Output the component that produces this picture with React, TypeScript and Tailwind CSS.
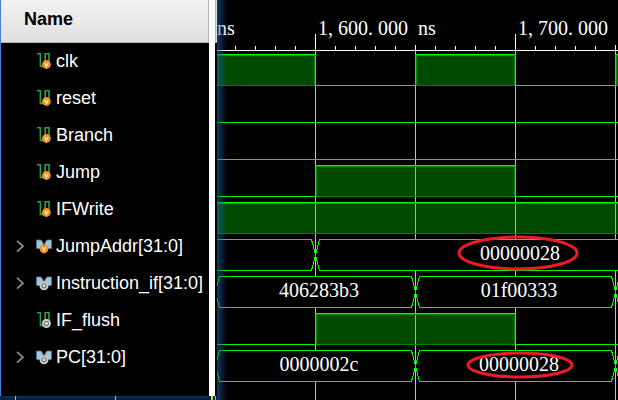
import React from "react";

type Badge = "value" | "ring";
type Level = { kind: "level"; from: number; to: number; high: boolean };
type Bus = { kind: "bus"; from: number; to: number; value?: string; center?: number };
type Signal = {
  name: string;
  bus?: boolean;
  badge: Badge;
  wave: (Level | Bus)[];
  mark?: { cx: number; cy: number; rx: number; ry: number };
};

const END = 1200;
const lv = (from: number, to: number, high: boolean): Level => ({ kind: "level", from, to, high });
const bus = (from: number, to: number, value?: string, center?: number): Bus => ({ kind: "bus", from, to, value, center });

const signals: Signal[] = [
  {
    name: "clk",
    badge: "value",
    wave: [lv(-2, 98, true), lv(98, 198, false), lv(198, 298, true), lv(298, 398, false), lv(398, 498, true), lv(498, END, false)],
  },
  { name: "reset", badge: "value", wave: [lv(-2, END, false)] },
  { name: "Branch", badge: "value", wave: [lv(-2, END, false)] },
  { name: "Jump", badge: "value", wave: [lv(-2, 98, false), lv(98, 298, true), lv(298, END, false)] },
  { name: "IFWrite", badge: "value", wave: [lv(-2, END, true)] },
  {
    name: "JumpAddr[31:0]",
    bus: true,
    badge: "value",
    wave: [bus(-102, 98), bus(98, END, "00000028", 303)],
    mark: { cx: 301, cy: 17, rx: 59, ry: 16 },
  },
  {
    name: "Instruction_if[31:0]",
    bus: true,
    badge: "ring",
    wave: [bus(-2, 198, "406283b3", 102), bus(198, 398, "01f00333", 302), bus(398, END)],
  },
  { name: "IF_flush", badge: "ring", wave: [lv(-2, 98, false), lv(98, 298, true), lv(298, END, false)] },
  {
    name: "PC[31:0]",
    bus: true,
    badge: "ring",
    wave: [bus(-2, 198, "0000002c", 102), bus(198, 398, "00000028", 302), bus(398, END)],
    mark: { cx: 303, cy: 18, rx: 52, ry: 12 },
  },
];

function BadgeMark({ type, cx, cy }: { type: Badge; cx: number; cy: number }) {
  if (type === "value") {
    return (
      <g>
        <circle cx={cx} cy={cy} r="4.4" fill="#f0921e" />
        <path d={`M${cx - 1.7} ${cy - 1.8}L${cx} ${cy + 1.8}L${cx + 1.7} ${cy - 1.8}`} fill="none" stroke="#fff3dc" strokeWidth="1.2" />
      </g>
    );
  }
  return (
    <g>
      <circle cx={cx} cy={cy} r="4.5" fill="#c9c9c9" />
      <circle cx={cx} cy={cy} r="2" fill="#e6e6e6" stroke="#6e6e6e" strokeWidth="1.1" />
    </g>
  );
}

function SignalIcon({ isBus, badge }: { isBus?: boolean; badge: Badge }) {
  return (
    <svg className="h-4 w-4 shrink-0" viewBox="0 0 16 16" aria-hidden="true">
      {isBus ? (
        <>
          <path d="M0.5 2H5L7.2 5V10.5H0.5Z" fill="#9cc6dc" stroke="#62727c" strokeWidth="0.8" />
          <path d="M15.5 2H11L8.8 5V10.5H15.5Z" fill="#9cc6dc" stroke="#62727c" strokeWidth="0.8" />
          <BadgeMark type={badge} cx={8} cy={10.8} />
        </>
      ) : (
        <>
          <path d="M1 0.8H4.4V13.4H9.2V0.8H13V12" fill="none" stroke="#2f9e44" strokeWidth="1.6" />
          <BadgeMark type={badge} cx={10.4} cy={11.5} />
        </>
      )}
    </svg>
  );
}

function NameRow({ signal }: { signal: Signal }) {
  return (
    <li className="flex h-[37px] items-center pb-0.5 pl-[15px]">
      {signal.bus ? (
        <button type="button" aria-label={`Expand ${signal.name}`} className="flex w-5 shrink-0">
          <svg className="h-3 w-2" viewBox="0 0 8 12" aria-hidden="true">
            <path d="M1 0.8L7 6.2L1 11.6" fill="none" stroke="#929292" strokeWidth="1.6" />
          </svg>
        </button>
      ) : (
        <span className="w-5 shrink-0" />
      )}
      <SignalIcon isBus={signal.bus} badge={signal.badge} />
      <span className="ml-1 text-lg leading-5 whitespace-nowrap text-white">{signal.name}</span>
    </li>
  );
}

function LevelShape({ from, to, high }: Level) {
  if (!high) return <rect x={from} y="34" width={to - from + 1} height="1" fill="#00f800" />;
  const w = to - from;
  return (
    <g>
      <rect x={from} y="3" width={w + 1} height="32" fill="#00e100" fillOpacity="0.33" />
      <rect x={from} y="34" width={w} height="1" fill="#008200" />
      <rect x={from + 1} y="4" width={w - 1} height="1" fill="#009600" />
      <rect x={from + 1} y="4" width="1" height="30" fill="#009600" />
      <rect x={to - 1} y="4" width="1" height="30" fill="#009600" />
      <path d={`M${from + 0.5} 35V3.5H${to + 0.5}V35`} fill="none" stroke="#00f800" />
    </g>
  );
}

function BusShape({ from, to, value, center }: Bus) {
  const l = from + 0.5;
  const r = to + 0.5;
  return (
    <g>
      <path
        d={`M${l} 19L${l + 4} 3.5H${r - 4}L${r} 19L${r - 4} 34.5H${l + 4}Z`}
        fill="#000"
        stroke="#00f800"
        shapeRendering="crispEdges"
      />
      {value && (
        <text x={center} y="24" textAnchor="middle" fill="#fff" className="font-['Liberation_Serif',serif] text-xl">
          {value}
        </text>
      )}
    </g>
  );
}

function WaveRow({ signal }: { signal: Signal }) {
  return (
    <svg className="relative z-10 block h-[37px] w-full overflow-visible" role="img" aria-label={`${signal.name} waveform`}>
      {signal.wave.map((s, i) => (s.kind === "level" ? <LevelShape key={i} {...s} /> : <BusShape key={i} {...s} />))}
      {signal.mark && <ellipse {...signal.mark} fill="none" stroke="#ed1c24" strokeWidth="3" />}
    </svg>
  );
}

const ticks = Array.from({ length: 60 }, (_, i) => 18 + i * 20);
const gridLines = Array.from({ length: 12 }, (_, i) => 98 + i * 100);

function TimeLabel({ thousands, hundreds }: { thousands: string; hundreds: string }) {
  return (
    <span className="w-[200px] shrink-0 whitespace-pre">
      <span className="mr-[5px]">{thousands},</span>
      <span className="mr-[5px]">{hundreds}.</span>
      <span className="mr-[5px]">000 </span>
      <span>ns</span>
    </span>
  );
}

function Ruler() {
  return (
    <div className="relative h-[51px]">
      <div className="flex pt-4 font-['Liberation_Serif',serif] text-xl leading-6 text-white">
        <span className="w-[101px] shrink-0">ns</span>
        <TimeLabel thousands="1" hundreds="600" />
        <TimeLabel thousands="1" hundreds="700" />
      </div>
      <svg className="absolute inset-0 h-full w-full" aria-hidden="true">
        <rect x="0" y="50" width="100%" height="1" fill="#fff" />
        {ticks.map((x) => {
          const top = x % 200 === 98 ? 34 : x % 100 === 98 ? 45 : 46;
          return <rect key={x} x={x} y={top} width="1" height={50 - top} fill="#fff" />;
        })}
      </svg>
    </div>
  );
}

export default function App() {
  return (
    <main className="flex min-h-screen overflow-hidden bg-black font-['Liberation_Sans',Arial,sans-serif]">
      <div className="flex w-[217px] shrink-0 flex-col">
        <div className="flex flex-1">
          <section className="min-w-0 flex-1 border-l border-[#4a7fd6] bg-black">
            <h2 className="flex h-[43px] items-center border-r border-b border-[#b4b4b4] bg-linear-to-b from-[#f3f3f3] to-[#dfdfe1] pb-1 pl-[23px] text-lg font-bold text-black">
              Name
            </h2>
            <ul>
              {signals.map((s) => (
                <NameRow key={s.name} signal={s} />
              ))}
            </ul>
          </section>
          <div className="w-1.5 bg-white" />
          <div className="w-0.5">
            <div className="h-[43px] border-b border-l border-[#b4b4b4] bg-[#dcdcdc]" />
          </div>
        </div>
        <div className="flex h-1 bg-linear-to-b from-[#0b3157] to-[#061d38]">
          <span className="ml-[15px] w-px bg-[#9fb4c8]" />
          <span className="ml-[99px] w-px bg-[#9fb4c8]" />
          <span className="ml-[95px] w-0.5 bg-[#c4dc28]" />
          <span className="ml-0.5 w-px bg-[#9fb4c8]" />
        </div>
      </div>

      <section className="relative min-w-0 flex-1 overflow-hidden">
        <Ruler />
        {signals.map((s) => (
          <WaveRow key={s.name} signal={s} />
        ))}
        <svg className="absolute inset-0 h-full w-full" aria-hidden="true">
          {gridLines.map((x) => (
            <rect key={x} x={x} y="51" width="1" height="100%" fill="#c0c0c0" />
          ))}
        </svg>
        <div className="pointer-events-none absolute inset-y-0 left-0 z-20 w-2.5 bg-linear-to-r from-[#1a62a8]/60 to-transparent" />
      </section>
    </main>
  );
}
